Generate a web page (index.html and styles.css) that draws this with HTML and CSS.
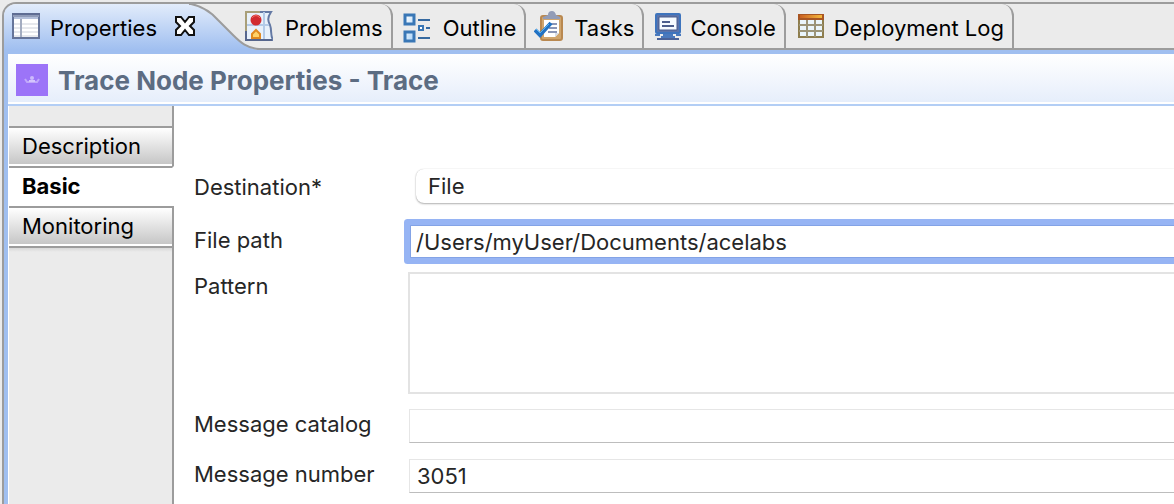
FILE: index.html
```html
<!DOCTYPE html>
<html lang="en">
<head>
<meta charset="utf-8">
<title>Trace Node Properties</title>
<link rel="stylesheet" href="styles.css">
</head>
<body>
<div class="view">
  <div class="tabs" role="tablist">
    <div class="tab tab-active">
      <svg class="curve" width="70" height="46" viewBox="0 0 70 46" aria-hidden="true">
        <defs><linearGradient id="tabfill" x1="0" y1="0" x2="0" y2="1"><stop offset="0" stop-color="#e2ecfb"/><stop offset="1" stop-color="#a0bff0"/></linearGradient></defs>
        <path d="M0 0H2C12 2 22 8 29 16L44 31C52 39 58 44 70 46H0Z" fill="url(#tabfill)"/>
        <path d="M0 0H2C12 2 22 8 29 16L44 31C52 39 58 44 70 45" fill="none" stroke="#9c9c9c" stroke-width="2"/>
      </svg>
      <button class="tab-label" type="button" role="tab" aria-selected="true">
        <svg class="icon" width="28" height="26" viewBox="0 0 28 26" aria-hidden="true">
          <path d="M1 1H27V25H1Z" fill="#fff" stroke="#66759a" stroke-width="2"/>
          <path d="M1 1H27V4H1Z" fill="#8f9bb8"/><path d="M0 1H28" stroke="#5f6d93" stroke-width="2"/>
          <path d="M2 5H26" stroke="#b4c0da" stroke-width="2"/>
          <path d="M2 11H26M2 15H26M2 19H26M2 23H26" stroke="#cdd1da" stroke-width="1"/>
          <path d="M9 6V24" stroke="#a3acc0" stroke-width="2"/>
        </svg>
        <span>Properties</span>
      </button>
      <button class="close icon" type="button" aria-label="Close">
        <svg width="20" height="20" viewBox="0 0 20 20" aria-hidden="true"><path d="M1 1H6L10 6L14 1H19V6L15 10L19 14V19H14L10 14L6 19H1V14L5 10L1 6Z" fill="#fff" stroke="#111" stroke-width="2"/></svg>
      </button>
    </div>
    <button class="tab tab-first tab-wide" type="button" role="tab">
      <svg class="icon" width="28" height="30" viewBox="0 0 28 30" aria-hidden="true">
        <path d="M1 1H26C22 7 23 10 25 14C27 19 25 24 28 29H1Z" fill="#e8f1fb" stroke="#6479a4" stroke-width="2"/>
        <path d="M1 14H24M19 1V28" stroke="#b4cbe8" stroke-width="2"/><path d="M1 0V29M0 1H15" stroke="#a99f78" stroke-width="2"/><path d="M1 20V29H27" fill="none" stroke="#56668d" stroke-width="2"/>
        <circle cx="11" cy="9" r="5.500" fill="#d22b30"/><path d="M7 7Q11 2 15 7" fill="none" stroke="#ee6c60" stroke-width="1"/>
        <path d="M7 27V23L11 19L15 23V27Z" fill="#ffd36a" stroke="#e18a21" stroke-width="2"/>
      </svg>
      <span>Problems</span>
    </button>
    <button class="tab tab-wide" type="button" role="tab">
      <svg width="28" height="30" viewBox="0 0 28 30" aria-hidden="true">
        <defs><linearGradient id="node" x1="0" y1="0" x2="1" y2="1"><stop offset="0" stop-color="#fff"/><stop offset="1" stop-color="#a9d3f8"/></linearGradient></defs>
        <path d="M2 2H11V11H2ZM2 19H11V28H2Z" fill="url(#node)" stroke="#3977b6" stroke-width="3"/>
        <path d="M16 13H20V17H16Z" fill="#fff" stroke="#3977b6" stroke-width="2"/>
        <path d="M15 7H27M23 15H27M15 25H27" stroke="#3569a0" stroke-width="2"/>
      </svg>
      <span>Outline</span>
    </button>
    <button class="tab tab-tight" type="button" role="tab">
      <svg class="icon" width="30" height="30" viewBox="0 0 30 30" aria-hidden="true">
        <rect x="7" y="5" width="21" height="24" rx="2" fill="#d0a56d" stroke="#b98850" stroke-width="2"/>
        <path d="M10 9H25V22L21 26H10Z" fill="#fff"/><path d="M21 26V22H25Z" fill="#d7deea"/>
        <path d="M9 8V6L14 4Q14 0 18 0Q21 0 22 4L26 6V8Z" fill="#929cb7"/>
        <path d="M16 13H23M15 17H23M14 21H23" stroke="#8a96b7" stroke-width="2"/>
        <path d="M1 19L6 24L17 12" fill="none" stroke="#2272c3" stroke-width="4"/><path d="M2 18L6 22L15 13" fill="none" stroke="#56b3f3" stroke-width="1"/>
      </svg>
      <span>Tasks</span>
    </button>
    <button class="tab tab-console" type="button" role="tab">
      <svg class="icon" width="28" height="28" viewBox="0 0 28 28" aria-hidden="true">
        <rect x="2" y="2" width="24" height="19" rx="1" fill="#5b73aa" stroke="#3e74bd" stroke-width="2"/>
        <path d="M5 5H23V18H5Z" fill="#f5faff" stroke="#4a5d8c" stroke-width="1"/>
        <path d="M8 10H16M8 14H20" stroke="#4b5d8c" stroke-width="2"/>
        <path d="M9 22H19V24H9Z" fill="#4a79bd"/><path d="M1 23H6M22 23H27" stroke="#4a79bd" stroke-width="2"/><path d="M3 27H25" stroke="#4a6299" stroke-width="2"/><path d="M7 25H21" stroke="#4a79bd" stroke-width="2"/>
      </svg>
      <span>Console</span>
    </button>
    <button class="tab" type="button" role="tab">
      <svg class="icon" width="26" height="24" viewBox="0 0 26 24" aria-hidden="true">
        <defs><linearGradient id="head"><stop offset="0" stop-color="#c96021"/><stop offset="1" stop-color="#f5b83a"/></linearGradient></defs>
        <path d="M1 1H25V23H1Z" fill="#eaf5fb" stroke="#8e7e4e" stroke-width="2"/>
        <path d="M1 11H25M1 17H25M9 6V23M17 6V23" stroke="#9b9478" stroke-width="2"/>
        <path d="M0 0H26V6H0Z" fill="#a85522"/><path d="M2 1H24V4H2Z" fill="url(#head)"/>
      </svg>
      <span>Deployment Log</span>
    </button>
    <div class="tabs-rest"></div>
  </div>

  <div class="panel">
    <header class="title-bar">
      <svg width="32" height="32" viewBox="0 0 32 32" aria-hidden="true">
        <path d="M0 0H32V32H0Z" fill="#9c74f8"/>
        <path d="M9 15L11 18H21L23 15" fill="none" stroke="#c0a8fb" stroke-width="2"/><circle cx="16" cy="14" r="2" fill="#cdbafc"/><path d="M13 17H19" stroke="#d5c6fd" stroke-width="2"/>
      </svg>
      <h1>Trace Node Properties - Trace</h1>
    </header>
    <div class="content">
      <nav class="side">
        <div class="side-top"></div>
        <button class="side-item" type="button">Description</button>
        <button class="side-item side-current" type="button" aria-current="page">Basic</button>
        <button class="side-item" type="button">Monitoring</button>
        <div class="side-rest"></div>
      </nav>
      <form class="form">
        <div class="row">
          <label for="destination">Destination*</label>
          <select class="picker" id="destination"><option>File</option></select>
        </div>
        <div class="row row-path">
          <label for="path">File path</label>
          <input class="field field-focus" id="path" type="text" value="/Users/myUser/Documents/acelabs">
        </div>
        <div class="row row-top">
          <label for="pattern">Pattern</label>
          <textarea class="area" id="pattern"></textarea>
        </div>
        <div class="row row-message">
          <label for="catalog">Message catalog</label>
          <input class="field" id="catalog" type="text">
        </div>
        <div class="row row-message">
          <label for="number">Message number</label>
          <input class="field" id="number" type="text" value="3051">
        </div>
      </form>
    </div>
  </div>
</div>
</body>
</html>
```
FILE: styles.css
```css
* { box-sizing: border-box; }
body {
  margin: 0;
  background: #ebebeb;
  color: #000;
  font: 22px/28px Inter, "Liberation Sans", sans-serif;
  overflow: hidden;
}
button, input, select, textarea { font: inherit; color: inherit; border: 0; border-radius: 0; margin: 0; padding: 0; background: none; }
svg { display: block; flex: none; }

.view {
  display: flex;
  flex-direction: column;
  min-height: calc(100vh - 2px);
  margin: 2px 0 0 2px;
  border: solid #9c9c9c;
  border-width: 2px 0 0 2px;
  border-top-left-radius: 14px;
  overflow: hidden;
}

.tabs { display: flex; height: 46px; }
.tab {
  display: flex;
  align-items: center;
  gap: 10px;
  flex: none;
  padding: 4px 8px 0 12px;
  border: solid #9c9c9c;
  border-width: 0 2px 2px 0;
  border-top-right-radius: 12px;
  white-space: nowrap;
}
.icon { margin-bottom: 4px; }
.tab-wide { gap: 12px; padding-left: 10px; }
.tab-tight { padding-left: 8px; }
.tab-console { gap: 8px; padding-left: 10px; }
.tab-first { padding-left: 0; border-bottom-color: transparent; background: linear-gradient(#9c9c9c, #9c9c9c) right bottom / calc(100% - 12px) 2px no-repeat border-box; }
.tab-active {
  position: relative;
  gap: 18px;
  padding: 2px 50px 0 8px;
  border: 0;
  background: linear-gradient(#e2ecfb, #a0bff0) left / calc(100% - 56px) 100% no-repeat;
}
.tab-label { display: flex; align-items: center; gap: 10px; position: relative; }
.close { position: relative; }
.curve { position: absolute; top: 0; right: -14px; }
.tabs-rest { flex: 1; border-bottom: 2px solid #9c9c9c; }

.panel {
  flex: 1;
  display: flex;
  flex-direction: column;
  border: solid #a0bff0;
  border-width: 4px 0 0 4px;
  background: #fff;
}
.title-bar {
  display: flex;
  align-items: center;
  gap: 10px;
  height: 52px;
  padding: 2px 8px 0 8px;
  border-bottom: 2px solid #b3cef5;
  background: linear-gradient(#fff, #e6eefb) top / 100% 48px no-repeat;
}
.title-bar h1 { margin: 0; padding-top: 2px; font-size: 26px; line-height: 32px; font-weight: 700; color: #5c6c82; }

.content { flex: 1; display: flex; }
.side { display: flex; flex-direction: column; width: 166px; flex: none; padding-left: 1px; }
.side-top { height: 20px; background: #ebebeb; border-right: 2px solid #9c9c9c; }
.side-item {
  height: 40px;
  padding: 0 13px 2px;
  border-top: 2px solid #9c9c9c;
  border-right: 2px solid #9c9c9c;
  background: linear-gradient(#fff, #c6c6c6) top / 100% 36px no-repeat #fff;
  text-align: left;
}
.side-current { border-right-color: #fff; background: #fff; font-weight: 700; }
.side-rest { flex: 1; border: solid #9c9c9c; border-width: 2px 2px 0 0; background: linear-gradient(#d8d8d8, #ebebeb 4px); }

.form { flex: 1; min-width: 0; padding: 63px 0 10px 20px; color: #262626; }
.row { display: grid; grid-template-columns: 214px 1fr; align-items: center; margin-bottom: 16px; }
.row label { padding-top: 2px; }
.row-path { margin-bottom: 14px; }
.row-top { align-items: start; margin-bottom: 15px; }
.row-top label { padding-top: 0; }
.row-message label { padding: 0 0 4px; }
.picker, .field, .area { width: 100%; min-width: 0; outline: 0; }
.picker {
  appearance: none;
  width: calc(100% - 8px);
  height: 34px;
  margin-left: 8px;
  padding: 0 12px;
  border-radius: 8px 0 0 8px;
  background: #fff;
  box-shadow: 0 1px 2px #0000004d, 0 0 1px #00000033;
}
.field {
  width: calc(100% - 1px);
  height: 34px;
  margin-left: 1px;
  padding: 0 7px;
  border: solid #e6e6e6;
  border-width: 1px 0 1px 1px;
  border-bottom-color: #bdbdbd;
}
.field-focus {
  margin: 6px 0 0 2px;
  height: 33px;
  padding: 0 5px;
  border-color: #83a3e6;
  border-radius: 1px;
  box-shadow: 0 0 0 6px #96b4f4;
}
.area { display: block; height: 122px; border: 2px solid #e3e3e3; border-right: 0; padding: 4px 6px; resize: none; }
```
